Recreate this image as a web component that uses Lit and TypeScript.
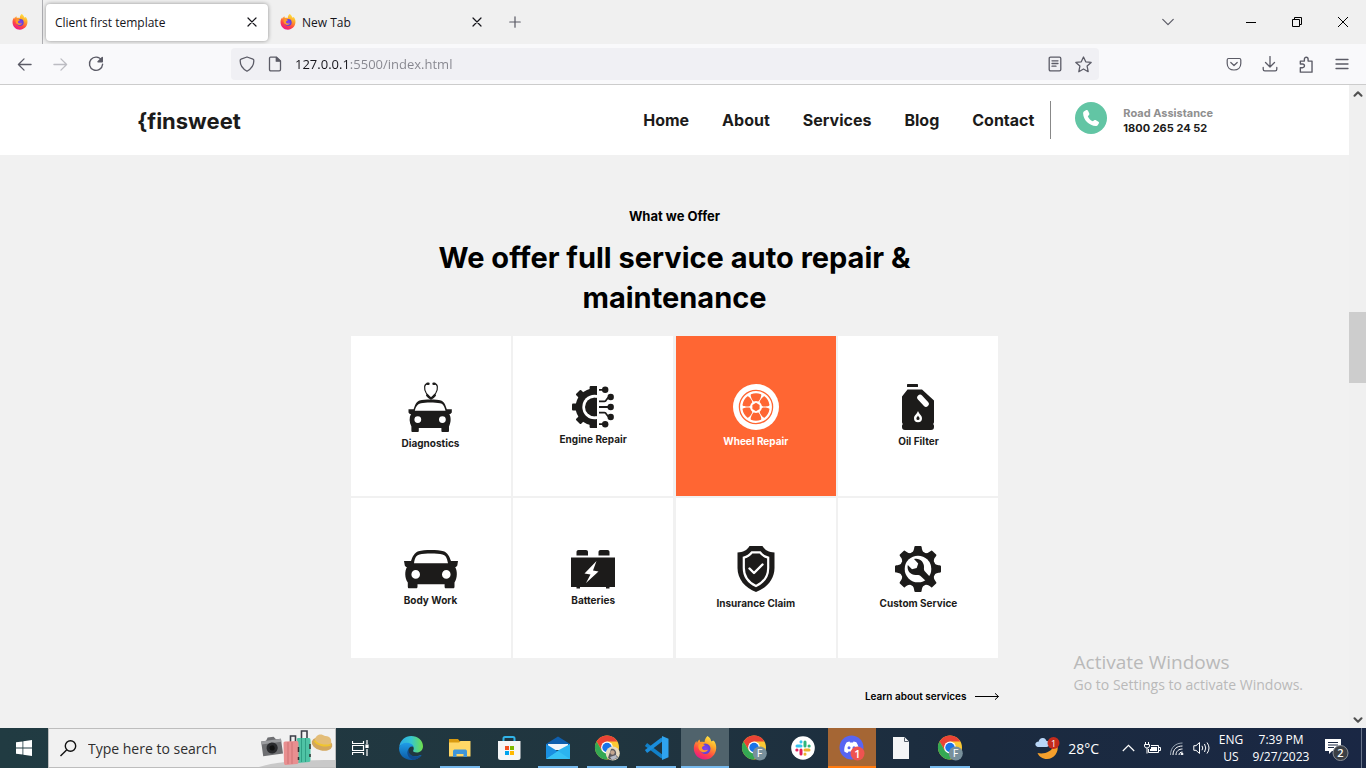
import { LitElement, html, css, svg } from "lit";
import { customElement, state } from "lit/decorators.js";
import { classMap } from "lit/directives/class-map.js";

const range = (n: number) => Array.from({ length: n }, (_, i) => i);

/* ---------- service icons ---------- */

const diagnostics = () => html`<svg width="46" height="50" viewBox="0 0 46 50" aria-hidden="true">
  <g fill="none" stroke="#1c1b1a" stroke-linecap="round">
    <path d="M20.200 1.600C15.800 1.200 15.800 7 18.200 11C19.500 13 21 14.200 23 16.500C25 14.200 26.500 13 27.800 11C30.200 7 30.200 1.200 25.800 1.600" stroke-width="1.200"/>
    <path d="M19.600 1.700H20.400M26.400 1.700H25.600" stroke-width="2.600"/>
    <path d="M19.200 13.200Q21 15.500 23 16.500Q25 15.500 26.800 13.200" stroke-width="2.400"/>
  </g>
  <path fill="#1c1b1a" fill-rule="evenodd" d="M0.500 27.300H5.600C7 23 8.500 19.500 11.500 18.600C17 17.200 28 17.200 33 18.600C36 19.500 37.500 23 38.800 27.300H43.800V30.500L42.300 32H41.300C43.300 35.500 43 40.500 41 44.500V48.800C41 49.600 40.500 50 39.800 50H34.500C33.800 50 33.400 49.600 33.400 48.800V46H10.800V48.800C10.800 49.600 10.400 50 9.700 50H4.500C3.800 50 3.400 49.600 3.400 48.800V44.500C1.200 40.500 1 35.500 3 32H1.800L0.500 30.500ZM6.800 28.800H37.500C36.500 24.500 35.300 21.800 32 21.200C27 20.300 17.500 20.300 13 21.200C9.700 21.800 7.500 24.500 6.800 28.800ZM9.800 34.200A3.400 3.400 0 1 0 9.800 41.000A3.400 3.400 0 1 0 9.800 34.200ZM34.400 34.200A3.400 3.400 0 1 0 34.400 41.000A3.400 3.400 0 1 0 34.400 34.200Z"/>
</svg>`;

const engine = () => html`<svg width="42" height="42" viewBox="0 0 42 42" aria-hidden="true">
  <defs>
    <clipPath id="half"><rect width="25" height="42"/></clipPath>
    <mask id="ring"><rect width="42" height="42" fill="#fff"/><circle cx="22.500" cy="21" r="12.200" fill="#000"/></mask>
  </defs>
  <g clip-path="url(#half)" fill="#1c1b1a">
    <g mask="url(#ring)">
      <circle cx="22" cy="21" r="18.400"/>
      <rect x="17.600" y="0" width="9" height="42" rx="1"/>
      <rect x="0" y="17.400" width="10" height="7.200" rx="1"/>
      <rect x="5" y="5" width="7" height="7" rx="1" transform="rotate(45 8.500 8.500)"/>
      <rect x="5" y="30" width="7" height="7" rx="1" transform="rotate(45 8.500 33.500)"/>
    </g>
    <circle cx="22.200" cy="21" r="9.200"/>
    <rect x="21.500" y="11.800" width="4" height="18.400"/>
  </g>
  <g stroke="#1c1b1a" stroke-width="1.800" fill="none"><path d="M27 3.800H33M27 15.400H32.500C35 15.400 34 11.500 38 11M27 21H37M27 26.600H32.500C35 26.600 34 30.500 38 31M27 38.200H33"/></g>
  <g fill="#1c1b1a"><circle cx="33.200" cy="3.800" r="3.200"/><circle cx="38.700" cy="11" r="3.200"/><circle cx="38.700" cy="21" r="3.200"/><circle cx="38.700" cy="31" r="3.200"/><circle cx="33.200" cy="38.200" r="3.200"/></g>
</svg>`;

const wheel = () => html`<svg width="46" height="46" viewBox="-23 -23 46 46" aria-hidden="true">
  <circle r="23" fill="#fff"/>
  <circle r="16.600" fill="none" stroke="#f63" stroke-width="1.300"/>
  ${range(6).map((i) => svg`<path transform=${`rotate(${i * 60})`} fill="#f63" d="M-5-12.700Q0-14.700 5-12.700C6.200-12.100 3.600-5.900 2.200-5.600Q0-6.200-2.200-5.600C-3.600-5.900-6.200-12.100-5-12.700Z"/>`)}
  <path fill="#f63" d="M0-4.200L3.600-2.100V2.100L0 4.200L-3.600 2.100V-2.100Z"/>
</svg>`;

const oil = () => html`<svg width="32" height="46" viewBox="0 0 32 46" aria-hidden="true">
  <g fill="#1c1b1a"><rect x="5" y="0" width="11" height="3" rx=".6"/>
  <path d="M5.500 5.500H20L32 16.500V38C32 39 31.300 39.500 31.300 40S32 41 32 42V43C32 45 31 46 29 46H3C1 46 0 45 0 43V42C0 41 .7 40.500 .7 40S0 39 0 38V12.500Z"/></g>
  <path d="M18 13.500L24 20" stroke="#fff" stroke-width="5.600" stroke-linecap="round"/>
  <path d="M16 27C17 30 20 31.500 20 34.200A4 4 0 0 1 12 34.200C12 31.500 15 30 16 27Z" fill="#fff"/>
  <path d="M16 31.500C16.500 33 17.600 33.200 17.600 34.500A1.600 1.600 0 0 1 14.400 34.500C14.400 33.200 15.500 33 16 31.500Z" fill="#1c1b1a"/>
</svg>`;

const body = () => html`<svg width="54" height="40" viewBox="0 0 54 40" aria-hidden="true">
  <path fill="#1c1b1a" fill-rule="evenodd" d="M0 12H7C8.500 7.500 10.500 3.500 14.500 2.200C20 .5 34 .5 39.500 2.200C43.500 3.500 45.500 7.500 47 12H54L53.300 16.500L52 18H51.200C53.500 22 53.500 29 50.500 33.500V37.500C50.500 38.800 50 39.300 49 39.300H42C41 39.300 40.600 38.800 40.600 37.500V35.200H13.500V37.500C13.500 38.800 13 39.300 12 39.300H5.200C4.200 39.300 3.800 38.800 3.800 37.500V33.500C.6 29 .6 22 2.900 18H2L.8 16.500ZM10 14.200H44C43 9 42 6.300 38.500 5.400C33 4.200 21 4.200 15.500 5.400C12 6.300 10.800 9 10 14.200ZM11.700 21.100A4.300 4.300 0 1 0 11.700 29.700A4.300 4.300 0 1 0 11.700 21.100ZM42.300 21.100A4.300 4.300 0 1 0 42.300 29.700A4.300 4.300 0 1 0 42.300 21.100Z"/>
</svg>`;

const battery = () => html`<svg width="44" height="40" viewBox="0 0 44 40" aria-hidden="true">
  <path fill="#1c1b1a" d="M5.500 6.500V3C5.500 1.700 6.300 1 7.500 1H15C16.200 1 17 1.700 17 3V6.500ZM27.500 6.500V3C27.500 1.700 28.300 1 29.500 1H36.500C37.700 1 38.500 1.700 38.500 3V6.500ZM0 8.500H44V38H38.500V39.500H35V38H9V39.500H5.500V38H0Z"/>
  <path fill="#fff" d="M25.500 12L13.500 24.500L19.500 25.500L15 34L27.500 22.500L22 21.500Z"/>
</svg>`;

const shield = () => html`<svg width="38" height="46" viewBox="0 0 38 46" aria-hidden="true">
  <path fill="#1c1b1a" d="M12.500 0H25.500C28 4.500 32 6.200 37.500 6.500V22C37.500 33 30 42 19 46C8 42 .5 33 .5 22V6.500C6 6.200 10 4.500 12.500 0Z"/>
  <path fill="#1c1b1a" stroke="#fff" stroke-width="2.200" d="M15 6.300H23C25.500 9.500 28 11 31.200 11.600V22C31.200 30 26.500 36.500 19 40C11.500 36.500 6.800 30 6.800 22V11.600C10 11 12.500 9.500 15 6.300Z"/>
  <path fill="none" stroke="#fff" stroke-width="2.400" stroke-linecap="round" stroke-linejoin="round" d="M12.500 22.500L17 27L25.500 18.500"/>
</svg>`;

const custom = () => html`<svg width="46" height="46" viewBox="-23 -23 46 46" aria-hidden="true">
  <g fill="#1c1b1a"><circle r="17.500"/>
  ${range(8).map((i) => svg`<path transform=${`rotate(${i * 45})`} d="M-6.800-16C-4-17.500-4-20-3.600-22.200Q-3.400-23-2.600-23H2.600Q3.400-23 3.600-22.200C4-20 4-17.500 6.800-16Z"/>`)}</g>
  <circle r="13.300" fill="#fff"/>
  <path fill="#1c1b1a" d="M-4-10C1.500-11.500 6.500-7 6-1.500C5.800 0 6 1.500 7 2.500L13 9L9 13L2.500 7C1.500 6 0 5.800-1.500 6C-7 6.500-11.500 2-10.200-4L-6 0.200L-1.300-1L0.200-5.600Z"/>
</svg>`;

const services = [
  { name: "Diagnostics", icon: diagnostics },
  { name: "Engine Repair", icon: engine },
  { name: "Wheel Repair", icon: wheel },
  { name: "Oil Filter", icon: oil },
  { name: "Body Work", icon: body },
  { name: "Batteries", icon: battery },
  { name: "Insurance Claim", icon: shield },
  { name: "Custom Service", icon: custom },
];

/* ---------- shared pictures ---------- */

const firefox = (size: number) => html`<svg width=${size} height=${size} viewBox="0 0 24 24" aria-hidden="true">
  <defs>
    <linearGradient id="fx" x1=".8" y1="0" x2=".3" y2="1"><stop offset="0" stop-color="#fff04a"/><stop offset=".35" stop-color="#ffa829"/><stop offset=".7" stop-color="#ff4644"/><stop offset="1" stop-color="#e8168c"/></linearGradient>
    <radialGradient id="fxb"><stop offset="0" stop-color="#8a3ff5"/><stop offset="1" stop-color="#5b44d6"/></radialGradient>
  </defs>
  <path fill="url(#fx)" d="M14.500 0C17 1.500 18 3.500 18.200 5.200C19.500 5.300 20.500 4.800 20.700 4.600C22.600 6.800 23.400 9.600 23.200 12.500C22.800 18.700 18 23.500 12 23.500C5.500 23.500 .8 18.500 .8 12.300C.8 9.500 1.600 7.500 3.300 5L4 7C4.500 5.500 5.300 4.400 6.500 3.500L7.300 6C8.800 5.600 10 5.800 11.500 6.200C11.800 3.500 12.700 1.500 14.500 0Z"/>
  <circle cx="12.300" cy="12.800" r="5.200" fill="url(#fxb)"/>
  <path fill="#ff9a2a" d="M5.500 8.500C8 7 10.500 7.600 12 9.200C10.800 10 9.500 10.300 9 11.500C8.800 12.800 10 14 11.600 14.200C13 14.400 14 13.600 15 13.800C14 16.200 10.500 17.200 8 15.500C5.500 14 5 11 5.500 8.500Z"/>
</svg>`;

const chrome = (badge: unknown) => html`<svg width="26" height="26" viewBox="0 0 26 26" aria-hidden="true">
  <circle cx="13" cy="12.500" r="12" fill="#fcc934"/>
  <path fill="#ea4335" d="M2.600 6.500A12 12 0 0 1 23.400 6.500H13L7.800 15.500Z"/>
  <path fill="#34a853" d="M2.600 6.500A12 12 0 0 0 13 24.500L18.200 15.500H7.800Z"/>
  <circle cx="13" cy="12.500" r="5.900" fill="#fff"/><circle cx="13" cy="12.500" r="4.700" fill="#1a73e8"/>
  ${badge}
</svg>`;
const letterBadge = svg`<circle cx="18.800" cy="18.500" r="7" fill="#78909c"/><text x="18.800" y="22" text-anchor="middle" font-size="10" font-family="Roboto, sans-serif" fill="#fff">F</text>`;
const photoBadge = svg`<circle cx="18.800" cy="18.500" r="7" fill="#e8dcc0"/><path d="M14 23C15 19 16 18 17 14C20 13 23 16 22 20L24 22C22 25 17 26 14 23Z" fill="#5d5b60"/><circle cx="18.500" cy="17.500" r="2.200" fill="#c4a790"/><path d="M16 22L22 20L23 23L18 25Z" fill="#b8bcc6"/>`;

const edge = html`<svg width="24" height="24" viewBox="0 0 24 24" aria-hidden="true">
  <defs><linearGradient id="e1" x1="0" x2="1"><stop offset="0" stop-color="#2aa9e8"/><stop offset=".5" stop-color="#36c6d0"/><stop offset="1" stop-color="#6fe04a"/></linearGradient>
  <linearGradient id="e2" x1="0" x2="0" y1="0" y2="1"><stop offset="0" stop-color="#1f9de8"/><stop offset="1" stop-color="#0c59a4"/></linearGradient></defs>
  <path fill="url(#e1)" d="M.2 11C1 4.500 6 0 12.200 0C19 0 24 4.800 24 10.200C24 14 21.300 16.500 17.800 16.500C15 16.500 13.500 15.500 14.200 14.600C15.400 13 15 9.500 11 8.500C6.500 7.400 2 8 .2 11Z"/>
  <path fill="url(#e2)" d="M.1 11.500C1.500 7.500 6.500 5.900 10.500 7.200C13.500 8.200 14.500 9.500 14.700 11C12 9.500 9 12 9.200 15C9.500 19 14 21.500 19.500 19.800C21 19.200 22 18.700 22.500 19.200C20.500 22.200 16.500 24 12.500 24C5 24-.5 18.500 .1 11.500Z"/>
  <path fill="#114a8b" d="M9.300 13.500C7 17 9 22 14 23.900C17.500 23.500 20.600 22 22.500 19.200C16 22.500 9.500 19.500 9.300 13.500Z"/>
</svg>`;

const explorer = html`<svg width="24" height="24" viewBox="0 0 24 24" aria-hidden="true">
  <path fill="#d99a10" d="M1 3H10L12 5.500H22V8H1Z"/><path fill="#ffd766" d="M1 6.500H11L12.500 5H22.500V20.500H1Z"/>
  <path fill="#3f96d8" d="M5 21V15.500C5 14 6 13.500 7 13.500H17C18 13.500 19 14 19 15.500V21H15.500V18H8.500V21Z"/>
</svg>`;

const store = html`<svg width="24" height="26" viewBox="0 0 24 26" aria-hidden="true">
  <path fill="none" stroke="#31b4e8" stroke-width="2" d="M6.500 8V3.500Q6.500 2 8 2H16Q17.500 2 17.500 3.500V8"/>
  <path fill="#f5f6f7" d="M1 6H23.500V22.500Q23.500 25 21 25H3.500Q1 25 1 22.500Z"/>
  <path fill="#f25022" d="M8 11H12V15H8Z"/><path fill="#7fba00" d="M13 11H17V15H13Z"/><path fill="#00a4ef" d="M8 16H12V20H8Z"/><path fill="#ffb900" d="M13 16H17V20H13Z"/>
</svg>`;

const mail = html`<svg width="24" height="24" viewBox="0 0 24 24" aria-hidden="true">
  <path fill="#0f5fae" d="M0 8L12 .5L24 8V12H0Z"/><path fill="#f2f6fa" d="M2 8H22V14H2Z"/>
  <path fill="#2bb4f0" d="M24 8V23H0L12 14.500Z"/><path fill="#1a8fe0" d="M0 8L12 15.500L0 23Z"/><path fill="#37c2f5" d="M12 15L24 23H0Z"/>
</svg>`;

const code = html`<svg width="25" height="24" viewBox="0 0 25 24" aria-hidden="true">
  <path fill="none" stroke="#1180c8" stroke-width="3.600" stroke-linejoin="round" d="M2 8.500L18.500 21"/>
  <path fill="none" stroke="#1a8ddb" stroke-width="3.600" d="M2 15.500L18.500 3"/>
  <path fill="#2fa3ee" d="M18 0L24.500 2.800V21.200L18 24V0Z"/>
</svg>`;

const slack = html`<svg width="24" height="24" viewBox="0 0 24 24" aria-hidden="true">
  <circle cx="12" cy="12" r="11.800" fill="#fff"/>
  <g stroke-width="3" stroke-linecap="round"><path stroke="#36c5f0" d="M6 10H10M10 5.800V6"/><path stroke="#2eb67d" d="M14 6V10M18 10H18.200"/><path stroke="#ecb22e" d="M14 14H18M14 18V18.200"/><path stroke="#e01e5a" d="M10 14V18M6 14H5.800"/></g>
</svg>`;

const discord = html`<svg width="26" height="26" viewBox="0 0 26 26" aria-hidden="true">
  <circle cx="12.500" cy="12.500" r="12" fill="#5865f2"/>
  <path fill="#fff" d="M7.500 7.500C9 6.700 10.500 6.500 10.500 6.500L11 7.500H14L14.500 6.500C16 6.700 17.500 7.500 17.500 7.500C19.500 10.500 20 13.500 19.700 16.500C18 17.800 16.500 18 16.500 18L15.500 16.500H9.500L8.500 18C8.500 18 7 17.800 5.300 16.500C5 13.500 5.500 10.500 7.500 7.500Z"/>
  <circle cx="10" cy="12.800" r="1.500" fill="#5865f2"/><circle cx="15" cy="12.800" r="1.500" fill="#5865f2"/>
  <circle cx="18.500" cy="18.500" r="7" fill="#ef5350"/>
  <text x="18.500" y="22.500" text-anchor="middle" font-size="11" font-weight="600" font-family="'Open Sans', sans-serif" fill="#fff">1</text>
</svg>`;

const notepad = html`<svg width="16" height="22" viewBox="0 0 16 22" aria-hidden="true"><path fill="#f4f5f6" d="M0 0H11.500L16 4.500V22H0Z"/><path fill="none" stroke="#555e68" d="M11.500 .5V4.500H15.500"/></svg>`;

const luggage = html`<svg width="76" height="38" viewBox="0 0 76 38" aria-hidden="true">
  <path fill="#c9c9c9" d="M0 38C16 33 38 31 76 31V38Z"/>
  <g transform="rotate(-8 13 18)"><path fill="#6e6f72" d="M3 11H8L10 8H16L18 11H23V26H3Z"/><path fill="#9c9da0" d="M3 11H23V14H3Z"/><circle cx="13" cy="19" r="5.600" fill="#292a2d"/><circle cx="13" cy="19" r="2.600" fill="#111"/></g>
  <path fill="none" stroke="#3c3f48" stroke-width="1.600" d="M31.500 14V7H36.500V13M42.500 11V2H48V10"/>
  <path fill="#4fc3a5" d="M38 10Q38 9 39 9L50 9Q51.500 9 51.500 11V31Q51.500 33 50 33L39 34Z"/><path stroke="#2f9f84" d="M42.500 9V33M46.500 9V33"/>
  <path fill="#e88f90" d="M24.500 14Q24.500 12.500 26 12.500L38 12Q39.500 12 39.500 14V33Q39.500 35 38 35L26.500 36Q25 36 25 34Z"/><path stroke="#cf7375" d="M29 13V35M33 13V35"/><path stroke="#333" stroke-width="1.500" d="M39.500 18V23M39.500 28V31M51 15V20M51 25V28"/>
  <g transform="rotate(14 63 15)"><ellipse cx="63" cy="15" rx="10.500" ry="6.500" fill="#d3a75c"/><path fill="#e3bd78" d="M55 13C55 6 60 5 64 6.500C69 5 72 8 71.500 13.500C67 17 58 17 55 13Z"/><path fill="none" stroke="#f0c52e" stroke-width="2" d="M55 13.500C58 17 67 17 71.500 13.500"/></g>
</svg>`;

const tasks: { label: string; icon: unknown; running?: boolean; active?: boolean; alert?: boolean }[] = [
  { label: "Microsoft Edge", icon: edge },
  { label: "File Explorer", icon: explorer, running: true },
  { label: "Microsoft Store", icon: store },
  { label: "Mail", icon: mail, running: true },
  { label: "Google Chrome", icon: chrome(photoBadge), running: true },
  { label: "Visual Studio Code", icon: code, running: true },
  { label: "Firefox", icon: firefox(24), active: true },
  { label: "Google Chrome F", icon: chrome(letterBadge) },
  { label: "Slack", icon: slack },
  { label: "Discord", icon: discord, alert: true },
  { label: "Notepad", icon: notepad },
  { label: "Google Chrome profile", icon: chrome(letterBadge), running: true },
];

/* ---------- thin line glyphs ---------- */

const line = (paths: string, size = 16, width = 1.2) => html`<svg class="line" width=${size} height=${size} viewBox="0 0 16 16" stroke-width=${width} aria-hidden="true"><path d=${paths}/></svg>`;
const glyph = {
  close: "M4 4L12 12M12 4L4 12",
  plus: "M8 2V14M2 8H14",
  back: "M15 8H1.500M7.500 2L1.500 8L7.500 14",
  next: "M1 8H14.500M8.500 2L14.500 8L8.500 14",
  shield: "M8 1L14 3.200C15 3.500 14.800 4.200 14.800 5C14.800 10 12 13 8 15.200C4 13 1.200 10 1.200 5C1.200 4.200 1 3.500 2 3.200Z",
  page: "M3.500 1.200H9.500L13.500 5V13.500Q13.500 14.800 12.200 14.800H3.800Q2.500 14.800 2.500 13.500V2.500Q2.500 1.200 3.500 1.200Z",
  reader: "M3.500 1.200H12.500Q13.800 1.200 13.800 2.500V13.500Q13.800 14.800 12.500 14.800H3.500Q2.200 14.800 2.200 13.500V2.500Q2.200 1.200 3.500 1.200ZM5 4.800H11M5 7.500H11M5 10.200H9",
  star: "M8 .9L10.100 5.500L15.200 6.100L11.400 9.500L12.400 14.800L8 12.200L3.600 14.800L4.600 9.500L.8 6.100L5.900 5.500Z",
  pocket: "M2.500 2.500H13.500Q14.800 2.500 14.800 4V7.500C14.800 11.500 12 14 8 14S1.200 11.500 1.200 7.500V4Q1.200 2.500 2.500 2.500ZM4.800 6.500L8 9.500L11.200 6.500",
  down: "M8 .5V10.800M3.500 6.500L8 11L12.500 6.500M1.200 11.500V13.200Q1.200 14.800 2.800 14.800H13.200Q14.800 14.800 14.800 13.200V11.500",
  puzzle: "M2.200 15.200V11H4.200C6.700 11 6.700 7.500 4.200 7.500H2.200V4.800H6V3C6 .5 9.500 .5 9.500 3V4.800H13.200V15.200Z",
  menu: "M2 3.500H14M2 8H14M2 12.500H14",
};

@customElement("app-root")
export class AppRoot extends LitElement {
  @state() private address = "127.0.0.1:5500/index.html";

  static styles = css`
    :host { display: flex; flex-direction: column; height: 100vh; min-width: 1100px; overflow: hidden; font-family: "Open Sans", "Noto Sans", sans-serif; color: #15141a; background: #f1f1f1; }
    * { box-sizing: border-box; }
    svg { display: block; flex: none; }
    button { display: grid; place-items: center; padding: 0; border: 0; background: none; color: inherit; font: inherit; }
    input { border: 0; outline: 0; padding: 0; background: none; font: inherit; min-width: 0; }
    a { color: inherit; text-decoration: none; }
    .line { fill: none; stroke: currentColor; stroke-linejoin: round; stroke-linecap: round; }

    .tabs { display: flex; align-items: center; height: 44px; background: #f0f0f0; font-size: 12px; flex: none; }
    .pinned { display: flex; align-items: center; justify-content: center; width: 43px; height: 44px; border-right: 1px solid #aeaeb2; padding-right: 2px; }
    .tab { display: flex; align-items: center; width: 222px; height: 37px; margin-left: 3px; padding: 0 8px 0 9px; border-radius: 4px; gap: 6px; }
    .tab.on { background: #fff; box-shadow: 0 0 4px rgba(0, 0, 0, .4); }
    .tab span { flex: 1; }
    .new { width: 32px; height: 32px; margin-left: 6px; color: #5b5b66; }
    .caption { display: flex; margin-left: auto; color: #000; }
    .caption button { width: 46px; height: 44px; }
    .caption .list { width: 34px; margin-right: 43px; color: #5b5b66; }

    .toolbar { display: flex; align-items: center; height: 41px; padding: 0 6px; background: #f9f9fb; border-bottom: 1px solid #ccc; color: #5b5b66; flex: none; }
    .toolbar button { width: 36px; height: 32px; }
    .toolbar .off { color: #bcbcc2; }
    .url { display: flex; align-items: center; flex: 1; height: 32px; margin: 0 117px; padding: 0 8px; background: #f0f0f4; border-radius: 4px; gap: 12px; }
    .url input { flex: 1; font-size: 13px; color: transparent; background: linear-gradient(90deg, #15141a 55px, #85858d 55px); -webkit-background-clip: text; background-clip: text; }
    .toolbar .url button { width: 16px; }

    .view { display: flex; flex: 1; min-height: 0; position: relative; }
    .site { flex: 1; overflow: hidden; font-family: Inter, sans-serif; font-weight: 700; }
    .bar { width: 17px; display: flex; flex-direction: column; align-items: center; background: #f0f0f0; color: #505050; }
    .bar button { width: 17px; height: 17px; }
    .thumb { width: 17px; height: 71px; margin: 210px 0 auto; background: #cdcdcd; }

    .head { display: flex; align-items: center; height: 70px; padding: 0 10%; background: #fff; color: #1c1b1a; }
    .logo { font-size: 22px; line-height: 32px; padding: 2px 0 0 2px; }
    .nav { display: flex; align-items: center; height: 38px; margin-left: auto; gap: 33px; padding-right: 16px; border-right: 1px solid #888; font-size: 16px; }
    .call { display: flex; align-items: center; gap: 16px; margin-left: 24px; font-size: 11px; line-height: 15px; }
    .call svg { margin-bottom: 4px; }
    .call div { padding: 2px 1px 0 0; }
    .call small { display: block; font-size: 11px; color: #8f8f8f; }

    .offer { display: flex; flex-direction: column; align-items: center; padding-top: 51px; color: #000; }
    .eyebrow { margin: 0 0 12px; font-size: 13px; line-height: 20px; }
    h2 { max-width: 500px; margin: 0 0 18px; text-align: center; font-size: 29px; line-height: 40px; font-weight: 700; }
    .grid { display: grid; grid-template-columns: repeat(4, 160px); justify-content: space-between; row-gap: 2px; width: 648px; margin: 0; padding: 0; list-style: none; }
    .card { display: flex; flex-direction: column; align-items: center; justify-content: center; gap: 4px; height: 160px; background: #fff; color: #1c1b1a; font-size: 10px; line-height: 14px; }
    .card.hot { background: #f63; color: #fff; }
    .more { display: flex; justify-content: flex-end; width: 648px; margin-top: 30px; font-size: 10px; line-height: 16px; font-weight: 600; }
    .more a { display: flex; align-items: center; gap: 8px; }

    .mark { position: absolute; right: 63px; bottom: 33px; color: #b9b9b9; font-size: 14px; line-height: 20px; pointer-events: none; }
    .mark p { margin: 0; }
    .mark .big { font-size: 19px; line-height: 26px; }

    .task { display: flex; align-items: stretch; height: 40px; background: linear-gradient(90deg, #213b42, #20353f 45%, #1b2b3f 72%, #1a2744); color: #fff; flex: none; }
    .task button { width: 48px; }
    .search { display: flex; align-items: center; width: 288px; padding: 0 0 0 11px; background: #f1f1f1; border: 1px solid #bdbdbd; gap: 11px; color: #111; }
    .search input { flex: 1; font-size: 14px; }
    .search input::placeholder { color: #2f2f2f; opacity: 1; }
    .apps { display: flex; gap: 1px; margin-left: 3px; }
    .task .app { display: flex; flex-direction: column; align-items: center; justify-content: center; height: 40px; padding-top: 2px; border-bottom: 2px solid transparent; }
    .task .running { width: 40px; margin: 0 4px; border-color: #76b9ed; }
    .task .active { background: #50636c; border-color: #76b9ed; }
    .task .alert { background: #a56634; border-color: #ff7a0f; }
    .tray { display: flex; align-items: center; margin-left: auto; font-size: 12px; line-height: 17px; text-align: center; }
    .weather { display: flex; align-items: center; gap: 8px; font-size: 14px; margin-right: 23px; }
    .status { display: flex; align-items: center; gap: 9px; margin-right: 8px; }
    .lang { width: 24px; }
    .clock { width: 52px; margin: 0 18px 0 12px; }
    .clock, .lang { display: flex; flex-direction: column; align-items: center; white-space: nowrap; }
    .task .note { width: 26px; margin-right: 10px; }
    .edge { width: 5px; height: 40px; border-left: 1px solid #68748a; }
  `;

  private tabStrip() {
    return html`<header class="tabs">
      <div class="pinned">${firefox(16)}</div>
      <div class="tab on"><span>Client first template</span><button aria-label="Close tab">${line(glyph.close, 16, 1.2)}</button></div>
      <div class="tab">${firefox(16)}<span>New Tab</span><button aria-label="Close tab">${line(glyph.close, 16, 1.2)}</button></div>
      <button class="new" aria-label="New tab">${line(glyph.plus, 14, 1.4)}</button>
      <div class="caption">
        <button class="list" aria-label="List all tabs">${line("M2 5L8 11L14 5", 14, 1.4)}</button>
        <button aria-label="Minimize"><svg width="10" height="10" aria-hidden="true"><path d="M0 5.500H10" stroke="#000"/></svg></button>
        <button aria-label="Restore"><svg width="10" height="10" fill="none" stroke="#000" aria-hidden="true"><path d="M.5 2.500H7.500V9.500H.5ZM2.500 2.500V.5H9.500V7.500H7.500"/></svg></button>
        <button aria-label="Close"><svg width="10" height="10" stroke="#000" aria-hidden="true"><path d="M0 0L10 10M10 0L0 10"/></svg></button>
      </div>
    </header>`;
  }

  private toolbar() {
    return html`<div class="toolbar">
      <button aria-label="Back">${line(glyph.back, 15, 1.4)}</button>
      <button class="off" aria-label="Forward">${line(glyph.next, 15, 1.4)}</button>
      <button aria-label="Reload"><svg class="line" width="16" height="16" viewBox="0 0 16 16" stroke-width="1.400" aria-hidden="true"><path d="M13.600 4.200A6.600 6.600 0 1 0 14.600 8.200"/><path fill="currentColor" d="M14.300 1.500V5.800H10Z"/></svg></button>
      <div class="url">
        ${line(glyph.shield, 16, 1.3)}
        <svg class="line" width="16" height="16" viewBox="0 0 16 16" stroke-width="1.300" aria-hidden="true"><path d=${glyph.page}/><path fill="currentColor" d="M9.300 1.500V5.200H13.300Z"/></svg>
        <input aria-label="Address" .value=${this.address} spellcheck="false">
        <button aria-label="Reader view">${line(glyph.reader, 16, 1.3)}</button>
        <button aria-label="Bookmark">${line(glyph.star, 17, 1.2)}</button>
      </div>
      <button aria-label="Save to Pocket">${line(glyph.pocket, 16, 1.2)}</button>
      <button aria-label="Downloads">${line(glyph.down, 16, 1.3)}</button>
      <button aria-label="Extensions">${line(glyph.puzzle, 17, 1.3)}</button>
      <button aria-label="Menu">${line(glyph.menu, 16, 1.3)}</button>
    </div>`;
  }

  private site() {
    return html`<main class="site">
      <header class="head">
        <a class="logo" href="#">{finsweet</a>
        <nav class="nav">${["Home", "About", "Services", "Blog", "Contact"].map((t) => html`<a href="#">${t}</a>`)}</nav>
        <div class="call">
          <svg width="32" height="32" viewBox="0 0 32 32" aria-hidden="true"><circle cx="16" cy="16" r="16" fill="#62c5a4"/><path fill="#fff" d="M9.200 9.300L11.300 8C12 7.700 12.600 8 12.900 8.600L14.300 11.600C14.500 12.200 14.400 12.700 14 13L12.800 14.200C13.600 16.400 15.400 18.300 17.800 19.300L19.200 18.200C19.600 17.900 20.100 17.800 20.600 18.100L23.400 19.700C24 20.100 24.200 20.700 23.900 21.300L22.700 23.200C22.300 23.800 21.700 24.100 21 24C14 23.600 8.300 17.900 8.100 11.200C8.100 10.400 8.500 9.700 9.200 9.300Z"/></svg>
          <div><small>Road Assistance</small>1800 265 24 52</div>
        </div>
      </header>
      <section class="offer">
        <p class="eyebrow">What we Offer</p>
        <h2>We offer full service auto repair &amp; maintenance</h2>
        <ul class="grid">${services.map((s, i) => html`<li class=${classMap({ card: true, hot: i === 2 })}>${s.icon()}<span>${s.name}</span></li>`)}</ul>
        <div class="more"><a href="#">Learn about services <svg width="24" height="8" viewBox="0 0 24 8" fill="none" stroke="#000" aria-hidden="true"><path d="M0 4.500H23.500M20 1.300L23.500 4.500L20 7.700"/></svg></a></div>
      </section>
    </main>`;
  }

  private taskbar() {
    return html`<footer class="task">
      <button aria-label="Start"><svg width="16" height="16" viewBox="0 0 16 16" fill="#fff" aria-hidden="true"><path d="M0 2.300L6.500 1.400V7.500H0ZM7.300 1.300L16 0V7.500H7.300ZM0 8.400H6.500V14.600L0 13.700ZM7.300 8.400H16V16L7.300 14.700Z"/></svg></button>
      <div class="search">
        <svg width="17" height="17" viewBox="0 0 17 17" fill="none" stroke="#111" stroke-width="1.400" aria-hidden="true"><circle cx="10.500" cy="6" r="5.200"/><path d="M6.600 9.900L.5 16"/></svg>
        <input type="text" placeholder="Type here to search" aria-label="Type here to search">
        ${luggage}
      </div>
      <button aria-label="Task view"><svg width="17" height="16" viewBox="0 0 17 16" fill="none" stroke="#fff" stroke-width="1.200" aria-hidden="true"><path d="M.5 1V3.500H11.500V1M.5 15V12.500H11.500V15M.5 5.500H11.500V10.500H.5ZM15 0V4M15 9V16"/><path fill="#fff" d="M14 5H16V7.500H14Z"/></svg></button>
      <div class="apps">${tasks.map((t) => html`<button aria-label=${t.label} class=${classMap({ app: true, running: !!t.running, active: !!t.active, alert: !!t.alert })}>${t.icon}</button>`)}</div>
      <div class="tray">
        <div class="weather">
          <svg width="25" height="24" viewBox="0 0 25 24" aria-hidden="true"><path fill="#f5a02c" d="M22.500 9C24 16 19 23 12 23C7.500 23 4 20.500 2.500 17C9 18.500 17 16 19 9Z"/><path fill="#b9d6f7" d="M4 11C1 11 0 9 .5 7.500C1 6 2.500 5.600 3.500 5.800C4 3 6 1.800 8 2C10 2.200 11 3.500 11.500 5C13.500 4.800 15 6.500 14.500 8.500C14.200 10 13 11 11.500 11Z"/><circle cx="18.500" cy="7" r="6" fill="#c42b1c"/><text x="18.500" y="10.500" text-anchor="middle" font-size="9" font-family="'Open Sans', sans-serif" fill="#fff">1</text></svg>
          <span>28°C</span>
        </div>
        <div class="status">
          <svg width="13" height="8" viewBox="0 0 13 8" fill="none" stroke="#fff" stroke-width="1.200" aria-hidden="true"><path d="M.8 7L6.500 1.300L12.200 7"/></svg>
          <svg width="17" height="13" viewBox="0 0 17 13" fill="none" stroke="#fff" aria-hidden="true"><path d="M1.500 0V2.500M4.500 0V2.500M.5 2.500H5.500V4Q5.500 6 3 6T.5 4ZM3 6V11.500M7 3.500H14.500V10.500H4.500V7M15 5.500H16.500V8.500H15"/><path fill="#fff" stroke="none" d="M7 5H13V9H6V7H7Z"/></svg>
          <svg width="14" height="13" viewBox="0 0 14 13" fill="none" stroke="#fff" aria-hidden="true"><path d="M3 13C3 7 7 4 12.500 4M6 13C6 9 9 7 12.500 7M9 13C9 11 10.500 10 12.500 10"/><path stroke="#9aa6b4" d="M.5 13C.5 5 6 1 12.500 1"/><circle cx="12" cy="12" r="1" fill="#fff"/></svg>
          <svg width="18" height="14" viewBox="0 0 18 14" fill="none" stroke="#fff" aria-hidden="true"><path d="M.8 4.700H3L6.500 1.500V12.500L3 9.300H.8ZM9 4.800Q10.500 7 9 9.200M11.500 3Q14 7 11.500 11M14 1.500Q18 7 14 12.500"/></svg>
        </div>
        <div class="lang"><span>ENG</span><span>US</span></div>
        <div class="clock"><span>7:39 PM</span><span>9/27/2023</span></div>
        <button class="note" aria-label="Notifications"><svg width="26" height="26" viewBox="0 0 26 26" aria-hidden="true"><path fill="#fff" d="M0 4H16V16H7L4 19V16H0Z"/><path stroke="#1b2945" d="M3 7.500H13M3 10H13M3 12.500H9"/><circle cx="15.500" cy="18" r="7.500" fill="#3b3f45" stroke="#8b9098"/><text x="15.500" y="22" text-anchor="middle" font-size="11" font-weight="600" font-family="'Open Sans', sans-serif" fill="#fff">2</text></svg></button>
        <div class="edge"></div>
      </div>
    </footer>`;
  }

  render() {
    return html`${this.tabStrip()}${this.toolbar()}
      <div class="view">
        ${this.site()}
        <div class="bar">
          <button aria-label="Scroll up">${line("M4 10L8 6L12 10", 14, 2.4)}</button>
          <div class="thumb"></div>
          <button aria-label="Scroll down">${line("M4 6L8 10L12 6", 14, 2.4)}</button>
        </div>
        <div class="mark"><p class="big">Activate Windows</p><p>Go to Settings to activate Windows.</p></div>
      </div>
      ${this.taskbar()}`;
  }
}
